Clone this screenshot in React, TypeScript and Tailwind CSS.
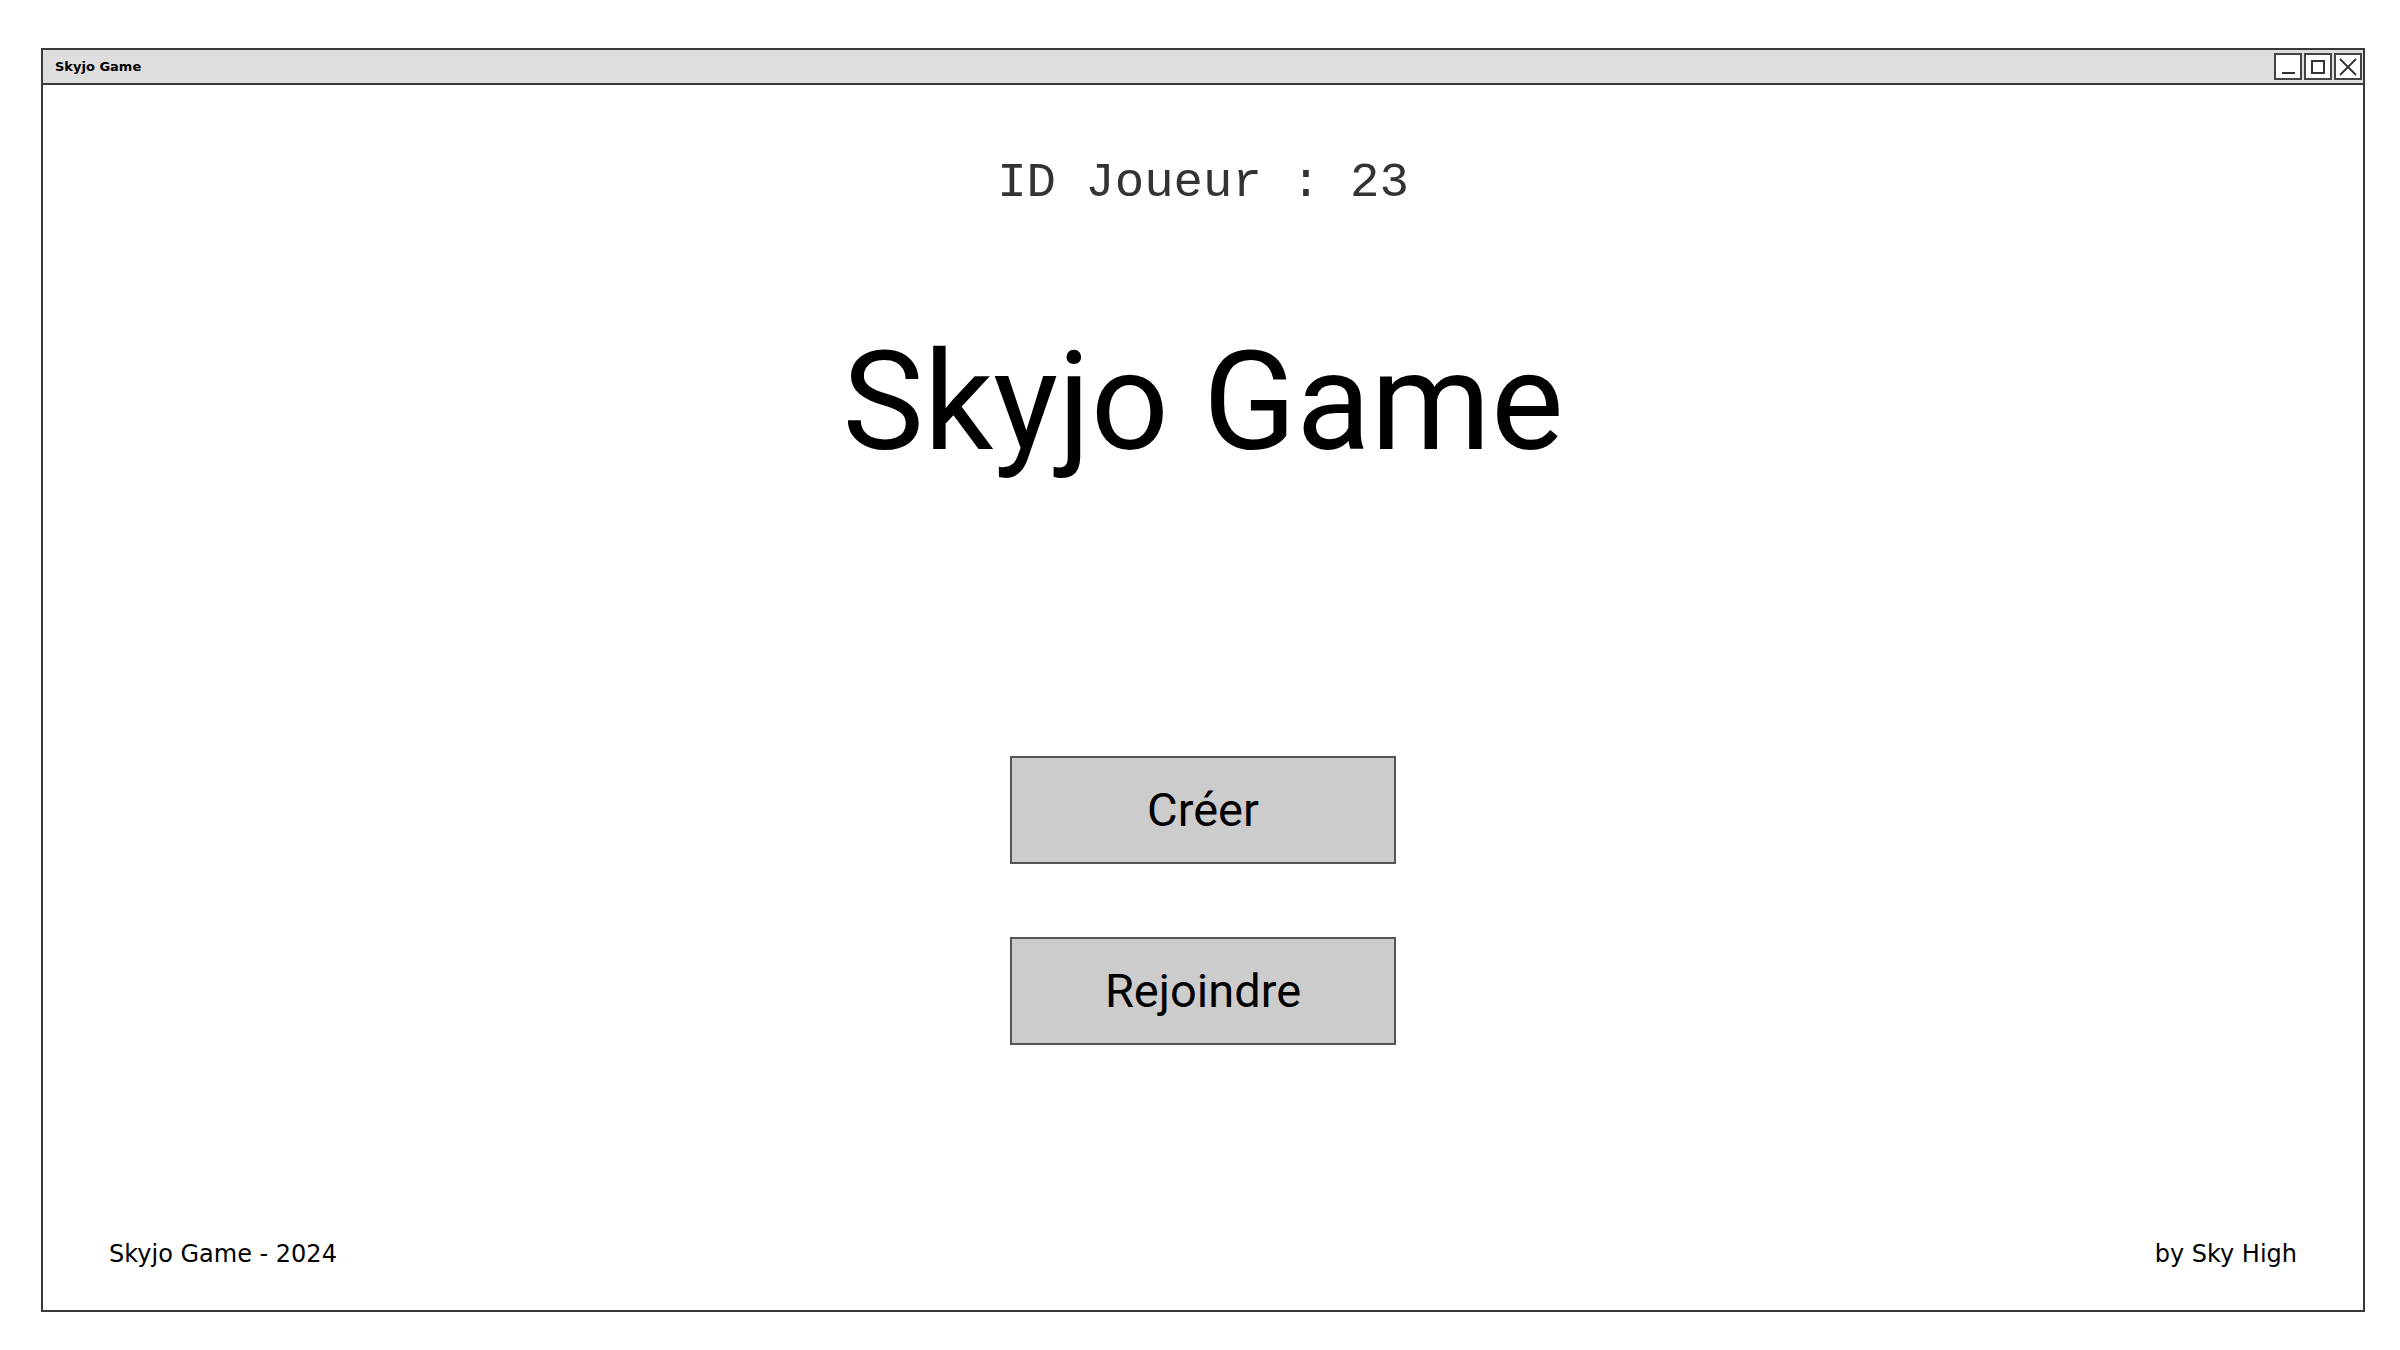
export default function App() {
  return (
    <div className="w-full h-[1350px] bg-white pl-[41px] pt-[48px]">
      <div className="w-[2324px] h-[1264px] border-2 border-[#3a3a3a] flex flex-col bg-white">
        <div className="h-[35px] bg-[#dedede] border-b-2 border-[#3a3a3a] flex items-center justify-between pl-[12px] pr-[1px]">
          <span className="text-[13px] font-bold text-black font-['Comic_Sans_MS','DejaVu_Sans',sans-serif]">
            Skyjo Game
          </span>
          <div className="flex gap-[2px]">
            <div className="w-[28px] h-[27px] border-2 border-[#444] bg-white flex items-end justify-center pb-[4px]">
              <div className="w-[13px] h-[2px] bg-[#333]" />
            </div>
            <div className="w-[28px] h-[27px] border-2 border-[#444] bg-white flex items-center justify-center">
              <div className="w-[14px] h-[14px] border-2 border-[#333]" />
            </div>
            <div className="w-[28px] h-[27px] border-2 border-[#444] bg-white flex items-center justify-center">
              <svg width="18" height="18" viewBox="0 0 18 18" stroke="#333" strokeWidth="1.8">
                <path d="M1 1L17 17M17 1L1 17" />
              </svg>
            </div>
          </div>
        </div>

        <div className="flex-1 flex flex-col items-center">
          <p className="mt-[74px] text-[49px] leading-none text-[#333] font-['Liberation_Mono',monospace]">
            ID Joueur : 23
          </p>
          <h1 className="mt-[126px] text-[137px] leading-none text-black font-['Roboto',sans-serif]">
            Skyjo Game
          </h1>

          <div className="mt-[285px] flex flex-col gap-[73px]">
            <button className="w-[386px] h-[108px] bg-[#cccccc] border-2 border-[#555] text-[47px] text-black font-['Roboto',sans-serif]">
              Créer
            </button>
            <button className="w-[386px] h-[108px] bg-[#cccccc] border-2 border-[#555] text-[47px] text-black font-['Roboto',sans-serif]">
              Rejoindre
            </button>
          </div>

          <div className="mt-auto w-full flex justify-between px-[66px] pb-[38px] text-[24px] text-black font-['Comic_Sans_MS','DejaVu_Sans',sans-serif]">
            <span>Skyjo Game - 2024</span>
            <span>by Sky High</span>
          </div>
        </div>
      </div>
    </div>
  );
}
